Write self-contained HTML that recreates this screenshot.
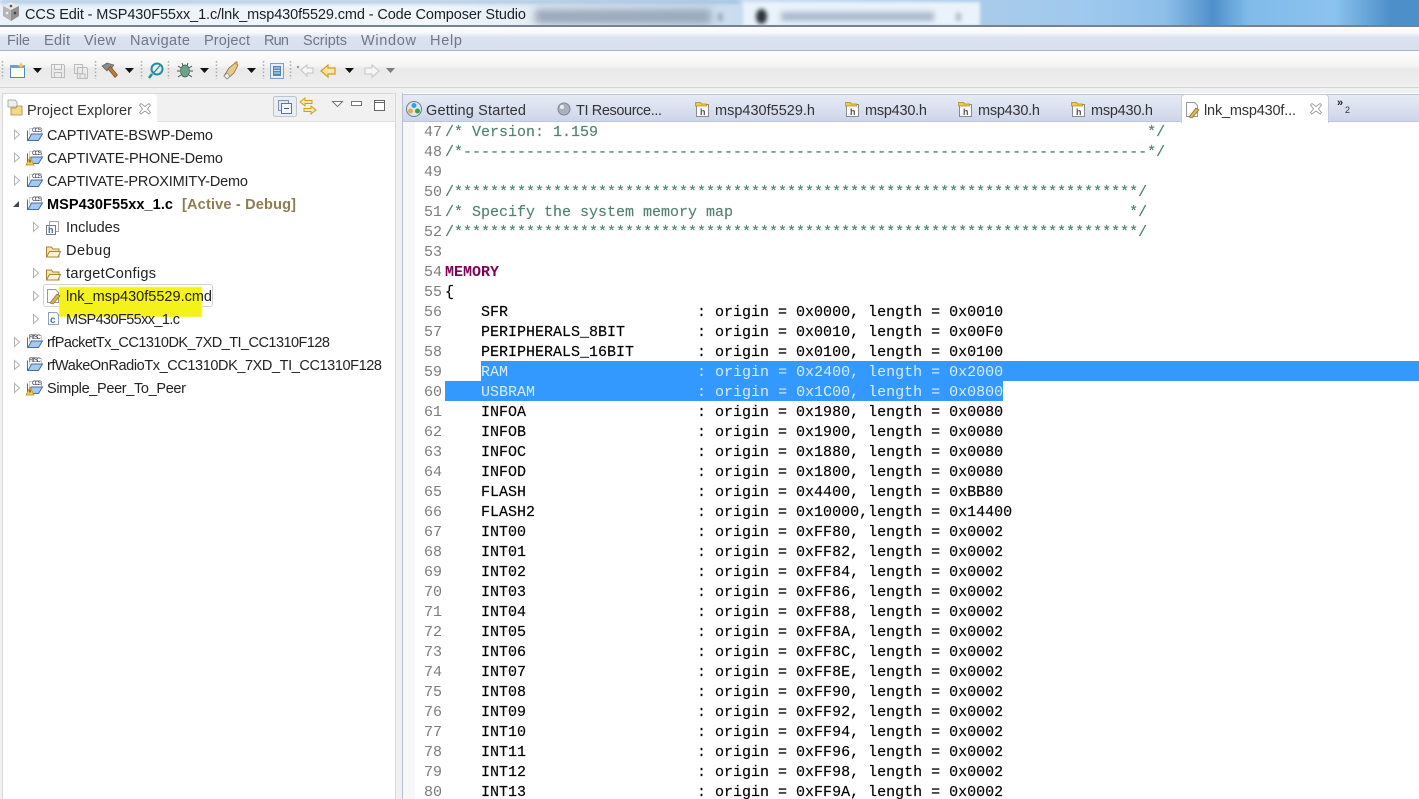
<!DOCTYPE html>
<html><head><meta charset="utf-8"><title>CCS Edit</title>
<style>
html,body{margin:0;padding:0;background:#f0f0f0}
#w{position:relative;width:1419px;height:799px;overflow:hidden;background:#f0f0f0}
.a{position:absolute}
pre{position:absolute;margin:0;left:445px;top:123px;font:15px/20px "Liberation Mono",monospace;color:#000;-webkit-text-stroke:.15px #000}
#n{left:415px;width:27px;text-align:right;color:#7c7c7c;-webkit-text-stroke:0}
i{font-style:normal;color:#4f8272;-webkit-text-stroke:.15px #4f8272}
b{color:#7f0055;-webkit-text-stroke:0}
u{text-decoration:none;color:#d8ebff;-webkit-text-stroke:0}
svg{position:absolute;left:0;top:0}
text{font-family:"Liberation Sans",sans-serif;font-size:14.5px;fill:#222}
.m text{fill:#6f7887}
.c{font-size:6.5px;fill:#334}
</style></head><body><div id="w">
<div class="a" style="left:0;top:0;width:1419px;height:26px;background:linear-gradient(90deg,#eaf2f9 0,#f2f7fb 30%,#e4edf6 37%,#cddff0 50%,#a9cbea 69%,#a0c9ee 76%,#8fc0ea 82%,#4f90cb 85.500%,#80bbea 88%,#8cc3ee 94%,#4d8fc8 98%,#4d8fc8 100%);overflow:hidden">
<div class="a" style="left:0;top:0;width:740px;height:3px;background:#8fb4d8;filter:blur(2px)"></div>
<div class="a" style="left:535px;top:9px;width:176px;height:15px;background:#9aa9ba;filter:blur(4px)"></div>
<div class="a" style="left:718px;top:13px;width:5px;height:8px;background:#9aa9ba;filter:blur(2px)"></div>
<div class="a" style="left:743px;top:2px;width:237px;height:24px;background:#eaf3fb;filter:blur(1.500px)"></div>
<div class="a" style="left:756px;top:9px;width:11px;height:15px;background:#2c3238;border-radius:50%;filter:blur(2px)"></div>
<div class="a" style="left:781px;top:12px;width:153px;height:9px;background:#a8b9cb;filter:blur(3px)"></div>
<div class="a" style="left:956px;top:13px;width:5px;height:8px;background:#a8b9cb;filter:blur(2px)"></div>
</div>
<div class="a" style="left:0;top:25px;width:1419px;height:2px;background:#74838f"></div>
<div class="a" style="left:0;top:27px;width:1419px;height:24px;background:linear-gradient(#fdfdfe 0,#f6f8fb 25%,#dbe2f0 45%,#d8e0ef 100%);border-bottom:1px solid #a9b2c0;box-sizing:border-box"></div>
<div class="a" style="left:0;top:51px;width:1419px;height:37px;background:linear-gradient(#fdfdfd 0,#f5f5f5 40%,#e9e9e9 50%,#ededed 90%,#f0f0f0 100%);border-bottom:1px solid #d3d3d3;box-sizing:border-box"></div>

<div class="a" style="left:2px;top:93px;width:394px;height:706px;background:#fff;border:1px solid #d8d8d8;border-bottom:0;box-sizing:border-box"></div>
<div class="a" style="left:3px;top:94px;width:392px;height:28px;background:#f1f1f1;border-bottom:1px solid #e2e2e2;box-sizing:border-box"></div>
<div class="a" style="left:3px;top:94px;width:154px;height:29px;background:#fff;border-radius:4px 4px 0 0"></div>
<div class="a" style="left:43px;top:284px;width:170px;height:23px;border:1px solid #d2d2d2;border-radius:3px;box-sizing:border-box;z-index:1"></div>
<div class="a" style="left:59px;top:287px;width:143px;height:30px;background:#f4f21a;filter:blur(.6px);z-index:1"></div>

<div class="a" style="left:402px;top:93px;width:1017px;height:706px;background:#fff;border-left:1px solid #b6bfd0;box-sizing:border-box"></div>
<div class="a" style="left:403px;top:94px;width:1016px;height:28px;background:linear-gradient(#e6ebf5,#cdd6ea);border-top:1px solid #bdc6d8;border-bottom:1px solid #bcc6da;box-sizing:border-box"></div>
<div class="a" style="left:1181px;top:94px;width:148px;height:29px;background:#fff;border:1px solid #c4cddd;border-bottom:0;border-radius:4px 4px 0 0;box-sizing:border-box"></div>
<div class="a" style="left:403px;top:122px;width:12px;height:677px;background:#f7f7f8"></div>
<div class="a" style="left:481px;top:361px;width:938px;height:20px;background:#3399ff"></div>
<div class="a" style="left:445px;top:381px;width:558px;height:20px;background:#3399ff"></div>

<pre id="n">47
48
49
50
51
52
53
54
55
56
57
58
59
60
61
62
63
64
65
66
67
68
69
70
71
72
73
74
75
76
77
78
79
80</pre>
<pre><i>/* Version: 1.159                                                             */
/*----------------------------------------------------------------------------*/

/****************************************************************************/
/* Specify the system memory map                                            */
/****************************************************************************/</i>

<b style="font-weight:bold">MEMORY</b>
{
    SFR                     : origin = 0x0000, length = 0x0010
    PERIPHERALS_8BIT        : origin = 0x0010, length = 0x00F0
    PERIPHERALS_16BIT       : origin = 0x0100, length = 0x0100
    <u>RAM                     : origin = 0x2400, length = 0x2000</u>
    <u>USBRAM                  : origin = 0x1C00, length = 0x0800</u>
    INFOA                   : origin = 0x1980, length = 0x0080
    INFOB                   : origin = 0x1900, length = 0x0080
    INFOC                   : origin = 0x1880, length = 0x0080
    INFOD                   : origin = 0x1800, length = 0x0080
    FLASH                   : origin = 0x4400, length = 0xBB80
    FLASH2                  : origin = 0x10000,length = 0x14400
    INT00                   : origin = 0xFF80, length = 0x0002
    INT01                   : origin = 0xFF82, length = 0x0002
    INT02                   : origin = 0xFF84, length = 0x0002
    INT03                   : origin = 0xFF86, length = 0x0002
    INT04                   : origin = 0xFF88, length = 0x0002
    INT05                   : origin = 0xFF8A, length = 0x0002
    INT06                   : origin = 0xFF8C, length = 0x0002
    INT07                   : origin = 0xFF8E, length = 0x0002
    INT08                   : origin = 0xFF90, length = 0x0002
    INT09                   : origin = 0xFF92, length = 0x0002
    INT10                   : origin = 0xFF94, length = 0x0002
    INT11                   : origin = 0xFF96, length = 0x0002
    INT12                   : origin = 0xFF98, length = 0x0002
    INT13                   : origin = 0xFF9A, length = 0x0002</pre>

<svg width="1419" height="799" viewBox="0 0 1419 799" style="z-index:3">
<defs>
<g id="pf"><path d="M.5 4.500v10h11" fill="none" stroke="#3f6fae"/><path d="M2.500 2.500h12v6h-12z" fill="#fff" stroke="#9db4d2" stroke-width=".6"/><path d="M1 14.500l3.500-6.500h11l-4 6.500z" fill="#a9c8ef" stroke="#3f6fae"/></g>
<g id="fo"><path d="M.5 3h5l1.500 2h6v8H.5z" fill="#f6e3a8" stroke="#a9843c"/><path d="M.5 13l3-5.500h11l-2.500 5.500z" fill="#fdf3cf" stroke="#a9843c"/></g>
<g id="ar"><path d="M1 0l5 4.500L1 9z" fill="#fff" stroke="#b3b3b3"/></g>
<g id="wa"><path d="M4 0l4 8H0z" fill="#f6cd4a" stroke="#b08a1c" stroke-width=".7"/><path d="M4 2.500v3" stroke="#222"/></g>
<path id="dd" d="M0 0h9L4.500 5z" fill="#111"/>
<path id="xx" d="M139.500 105l1.500-1.500 4 3 4-3 1.500 1.500-3 4 3 3.500-1.500 1.500-4-3-4 3-1.500-1.500 3-3.500z" fill="#fff" stroke="#8f8f8f" stroke-width=".8"/>
<g id="hh"><rect x="1.500" y="3.500" width="12" height="12" fill="#fff" stroke="#8a8a8a"/><path d="M.5 5V1.500h5l1 1.500h5v2z" fill="#eec94f" stroke="#b08a1c" stroke-width=".7"/></g>
</defs>

<!-- title bar -->
<g><path d="M3 6l8-4 8 4v10l-8 5-8-5z" fill="#b5b5b5"/><path d="M3 6l8 4 8-4-8-4z" fill="#e9e9e9"/><path d="M11 10v11l8-5V6z" fill="#8f8f8f"/><circle cx="11" cy="6" r="1.300" fill="#555"/><circle cx="7" cy="13" r="1.300" fill="#eee"/><circle cx="15" cy="13" r="1.300" fill="#444"/></g>
<text x="25" y="19" textLength="501" style="fill:#1a1f25">CCS Edit - MSP430F55xx_1.c/lnk_msp430f5529.cmd - Code Composer Studio</text>

<!-- menu -->
<g class="m">
<text x="7" y="45" textLength="23">File</text><text x="44" y="45" textLength="26">Edit</text><text x="84" y="45" textLength="32">View</text><text x="130" y="45" textLength="60">Navigate</text><text x="204" y="45" textLength="46">Project</text><text x="264" y="45" textLength="25">Run</text><text x="303" y="45" textLength="44">Scripts</text><text x="361" y="45" textLength="55">Window</text><text x="430" y="45" textLength="32">Help</text>
</g>

<!-- toolbar -->
<g stroke="#aaa" stroke-width="1.500" stroke-dasharray="1.500 2">
<path d="M2.500 61v18M95.500 61v18M141.500 61v18M168.500 61v18M216.500 61v18M263.500 61v18M290.500 61v18"/></g>
<rect x="10.500" y="65.500" width="14" height="12" fill="#fdfdf0" stroke="#5b83b5"/><rect x="10" y="65" width="15" height="3" fill="#6fa0d5"/><path d="M21 62l1 2.500 2.500 1-2.500 1-1 2.500-1-2.500-2.500-1 2.500-1z" fill="#f2c744"/>
<use href="#dd" x="33" y="68"/>
<g fill="none" stroke="#bbb"><path d="M51.500 64.500h12l1 1v12h-13z"/><path d="M54.500 64.500v5h7v-5M54.500 77.500v-5h7v5"/>
<path d="M74.500 64.500h8v9h-8zM77.500 67.500h9l1 1v10h-10z"/><path d="M80 78v-4h5v4"/></g>
<path d="M102 66l5-3 7 2-3 4-2-1-2 3z" fill="#8b8b8b" stroke="#555" stroke-width=".6"/><path d="M108 69l2.500-2.500 7 8.500-2.500 2.500z" fill="#b87a3d" stroke="#7a4a1f" stroke-width=".6"/>
<use href="#dd" x="125" y="68"/>
<circle cx="157" cy="69" r="5.500" fill="none" stroke="#1f90a0" stroke-width="2"/><path d="M152 74l-3 4" stroke="#1f90a0" stroke-width="2.500"/><path d="M153.500 73l7-8" stroke="#1f90a0" stroke-width="1.300"/>
<ellipse cx="185" cy="71" rx="4.500" ry="6" fill="#6fa08a" stroke="#35604e" stroke-width=".7"/><path d="M178 66l3 2M192 66l-3 2M177 71h3M193 71h-3M178 77l3-2M192 77l-3-2M182 63l1 3M188 63l-1 3" stroke="#35604e"/>
<use href="#dd" x="200" y="68"/>
<path d="M224 76l3 3 7-6 4-8-3-2-6 5z" fill="#e2c98e" stroke="#8b6b33" stroke-width=".8"/><path d="M224 76l3 3 3-3-3-3z" fill="#eee" stroke="#888" stroke-width=".6"/><path d="M234 63l3 2 1-3-2-1z" fill="#c94" />
<use href="#dd" x="247" y="68"/>
<rect x="270.500" y="63.500" width="13" height="15" fill="#e6eefa" stroke="#7f9fc9"/><rect x="273" y="66" width="8" height="10" fill="#5a82b8"/><path d="M274 68h6M274 70.500h6M274 73h6" stroke="#cfe0f5"/>
<path d="M300 71l6-5v3h6v5h-6v3z" fill="#f6f6f6" stroke="#c4c4c4" transform="translate(1 -1)"/><path d="M297 66l2 2m0-2l-2 2" stroke="#999"/>
<path d="M321 71l7-6v3h7v6h-7v3z" fill="#fde8a0" stroke="#d89a20" stroke-width="1.200"/>
<use href="#dd" x="345" y="68"/>
<path d="M379 71l-7-6v3h-7v6h7v3z" fill="#f6f6f6" stroke="#c8c8c8" stroke-width="1.100"/>
<use href="#dd" x="386" y="68" opacity=".5"/>

<!-- project explorer tab -->
<path d="M8 100h7l2 2v5H8z" fill="#eee" stroke="#999" stroke-width=".8"/><path d="M11 108h5l1-2h5v9H11z" fill="#f4d98a" stroke="#a8862f" stroke-width=".8"/>
<text x="27" y="115" textLength="105" style="fill:#333">Project Explorer</text>
<use href="#xx"/>
<rect x="273.500" y="96.500" width="23" height="20" rx="2" fill="#eaedf3" stroke="#bcc5d2"/><rect x="278.500" y="100.500" width="10" height="10" fill="#dfe7f3" stroke="#7f93b0"/><rect x="281.500" y="103.500" width="10" height="10" fill="#f3f6fb" stroke="#5c7699"/><path d="M284 108.500h5" stroke="#3d587d"/>
<path d="M300 102l5-4v2.500h7v3h-7v2.500zM316 110l-5-4v2.500h-7v3h7v2.500z" fill="#fce9a8" stroke="#d59a22"/>
<path d="M332.500 101.500h10l-5 5z" fill="#fff" stroke="#777"/>
<rect x="351.500" y="101.500" width="10" height="4" fill="#fff" stroke="#777"/>
<rect x="374.500" y="100.500" width="10" height="10" fill="#fff" stroke="#666"/><path d="M374.500 102.500h10" stroke="#666"/>

<!-- tree -->
<use href="#ar" x="13.500" y="130"/><use href="#ar" x="13.500" y="153"/><use href="#ar" x="13.500" y="176"/>
<path d="M13 207l6-6v6z" fill="#444"/>
<use href="#ar" x="32.500" y="222.500"/><use href="#ar" x="32.500" y="268.500"/><use href="#ar" x="32.500" y="291.500"/><use href="#ar" x="32.500" y="314.500"/>
<use href="#ar" x="13.500" y="337.500"/><use href="#ar" x="13.500" y="360.500"/><use href="#ar" x="13.500" y="383.500"/>
<use href="#pf" x="27" y="126"/><text x="32" y="132" class="c" textLength="10">CCS</text>
<use href="#pf" x="27" y="149"/><text x="32" y="155" class="c" textLength="10">CCS</text><use href="#wa" x="26" y="157"/>
<use href="#pf" x="27" y="172"/><text x="32" y="178" class="c" textLength="10">CCS</text>
<use href="#pf" x="27" y="195"/><text x="32" y="201" class="c" textLength="10">CCS</text>
<use href="#pf" x="27" y="333"/><text x="29" y="339" class="c" textLength="12">RTSC</text>
<use href="#pf" x="27" y="356"/><text x="29" y="362" class="c" textLength="12">RTSC</text>
<use href="#pf" x="27" y="379"/><text x="32" y="385" class="c" textLength="10">CCS</text><use href="#wa" x="26" y="387"/>
<text x="47" y="140" textLength="166">CAPTIVATE-BSWP-Demo</text>
<text x="47" y="163" textLength="176">CAPTIVATE-PHONE-Demo</text>
<text x="47" y="186" textLength="201">CAPTIVATE-PROXIMITY-Demo</text>
<text x="47" y="209" textLength="126" style="font-weight:bold;fill:#000">MSP430F55xx_1.c</text>
<text x="182" y="209" textLength="114" style="font-weight:bold;fill:#8f7d50">[Active - Debug]</text>
<rect x="49.500" y="221.500" width="9" height="10" fill="#fff" stroke="#aa9"/><rect x="46.500" y="225.500" width="9" height="9" fill="#fff" stroke="#778"/><text x="48" y="233" style="font-size:9px;font-weight:bold;fill:#3d6fa8">h</text>
<text x="66" y="232" textLength="54">Includes</text>
<use href="#fo" x="46" y="244"/><text x="66" y="255" textLength="45">Debug</text>
<use href="#fo" x="46" y="267"/><text x="66" y="278" textLength="90">targetConfigs</text>
<path d="M47.500 289.500h8l3 3v10h-11z" fill="#fff" stroke="#999"/><path d="M50 303l7-9 3 2-7 8z" fill="#d9b55a" stroke="#8b6b23" stroke-width=".7"/>
<text x="66" y="301" textLength="146">lnk_msp430f5529.cmd</text>
<path d="M48.500 312.500h8l2 2v10h-10z" fill="#fff" stroke="#8fa3bd"/><text x="50" y="323" style="font-size:10px;font-weight:bold;fill:#3d6fa8">c</text>
<text x="66" y="324" textLength="114">MSP430F55xx_1.c</text>
<text x="47" y="347" textLength="283">rfPacketTx_CC1310DK_7XD_TI_CC1310F128</text>
<text x="47" y="370" textLength="335">rfWakeOnRadioTx_CC1310DK_7XD_TI_CC1310F128</text>
<text x="47" y="393" textLength="139">Simple_Peer_To_Peer</text>

<!-- editor tabs -->
<circle cx="414" cy="109" r="7.500" fill="#dfe6ee" stroke="#6d7a88"/><circle cx="414" cy="105.500" r="2.500" fill="#3aa0d8"/><circle cx="410.500" cy="111" r="2.500" fill="#e0b040"/><circle cx="417.500" cy="111" r="2.500" fill="#3aa050"/>
<text x="426" y="115" textLength="100" style="fill:#333">Getting Started</text>
<circle cx="564" cy="109" r="6" fill="#aab0bd" stroke="#7f8795"/><circle cx="562" cy="107" r="2" fill="#eee"/>
<use href="#hh" x="695" y="101"/><text x="700" y="115" style="font-size:9px;font-weight:bold;fill:#555">h</text>
<text x="576" y="115" textLength="86" style="fill:#333">TI Resource...</text>
<text x="715" y="115" textLength="100" style="fill:#333">msp430f5529.h</text>
<use href="#hh" x="845" y="101"/><text x="850" y="115" style="font-size:9px;font-weight:bold;fill:#555">h</text>
<text x="865" y="115" textLength="62" style="fill:#333">msp430.h</text>
<use href="#hh" x="958" y="101"/><text x="963" y="115" style="font-size:9px;font-weight:bold;fill:#555">h</text>
<text x="978" y="115" textLength="62" style="fill:#333">msp430.h</text>
<use href="#hh" x="1071" y="101"/><text x="1076" y="115" style="font-size:9px;font-weight:bold;fill:#555">h</text>
<text x="1091" y="115" textLength="62" style="fill:#333">msp430.h</text>
<path d="M1186.500 102.500h8l3 3v11h-11z" fill="#fff" stroke="#999"/><path d="M1189 117l7-9 3 2-7 8z" fill="#d9b55a" stroke="#8b6b23" stroke-width=".7"/>
<text x="1204" y="115" textLength="92" style="fill:#333">lnk_msp430f...</text>
<use href="#xx" x="1171"/>
<text x="1337" y="106" style="font-size:11px;font-weight:bold;fill:#222">»</text>
<text x="1345" y="113" style="font-size:9px;fill:#333">2</text>
</svg>
</div></body></html>
